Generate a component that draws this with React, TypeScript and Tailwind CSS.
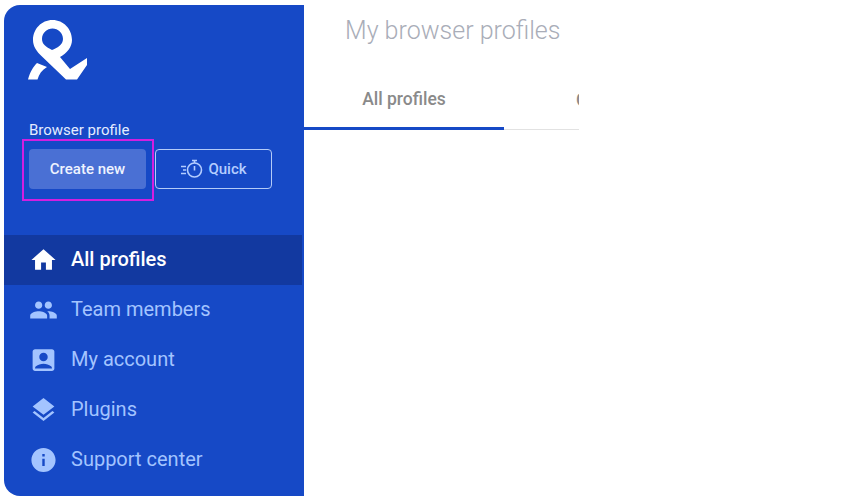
import { MdHome, MdPeople, MdAccountBox, MdLayers, MdInfo } from "react-icons/md"

const navItems = [
  { label: "All profiles", icon: MdHome, active: true },
  { label: "Team members", icon: MdPeople },
  { label: "My account", icon: MdAccountBox },
  { label: "Plugins", icon: MdLayers },
  { label: "Support center", icon: MdInfo },
]

function Logo() {
  return (
    <svg width="60" height="60" viewBox="0 0 60 60" className="block" fill="white">
      <path
        fillRule="evenodd"
        d="M38 59.5 L14.5 37 C8 31 5 26 5 20 C5 9 13.5 0 24.5 0 C35.5 0 44 9 44 20 C44 27 39 33 32 37 L42 49 L59 38 L59 45 L49 59.5 Z M24 30 C29 28 35 25 35 19 C35 13 30 8.5 24.5 8.5 C19 8.5 14 13 14 19 C14 24 18 27 24 30 Z"
      />
      <path d="M0 59.5 C2 52 5 47 9 43 L19 47 C14 50 11 54 9.5 59.5 Z" />
    </svg>
  )
}

function Stopwatch() {
  return (
    <svg width="24" height="20" viewBox="0 0 24 20" fill="none" stroke="currentColor" strokeWidth="1.6">
      <circle cx="14.5" cy="11" r="7" />
      <path d="M14.5 7 V11.5 M12 1.5 H17 M14.5 1.5 V4 M1 7.5 H6 M3 11 H6 M1 14.5 H6" />
    </svg>
  )
}

function App() {
  return (
    <div className="flex h-[500px] w-[847px] overflow-hidden bg-white pt-[5px] pl-[4px] font-['Roboto',sans-serif]">
      <aside className="flex h-[491px] w-[300px] shrink-0 flex-col rounded-l-[16px] bg-[#1649c6]">
        <div className="pt-[15px] pl-[24px]">
          <Logo />
        </div>
        <p className="mt-[41px] pl-[25px] text-[15px] leading-[18px] text-[#e4ecff]">Browser profile</p>
        <div className="mt-[10px] flex gap-[9px] pl-[25px]">
          <div className="relative">
            <button className="flex h-[40px] w-[117px] items-center justify-center rounded-[4px] bg-[#4a70d4] text-[15px] font-medium text-[#eef3ff]">
              Create new
            </button>
            <span className="absolute -top-[10px] -right-[8px] -bottom-[12px] -left-[7px] border-2 border-[#d21fe0]" />
          </div>
          <button className="flex h-[40px] w-[117px] items-center justify-center gap-[4px] rounded-[4px] border-[1.5px] border-[#b4cbf8] text-[15px] font-medium text-[#b4cdff]">
            <Stopwatch />
            Quick
          </button>
        </div>
        <nav className="mt-[46px] flex flex-col">
          {navItems.map(({ label, icon: Icon, active }) => (
            <div
              key={label}
              className={`flex h-[50px] w-[298px] items-center gap-[13px] pb-[2px] pl-[25px] text-[20px] ${
                active ? "bg-[#1239a0] font-medium text-white" : "text-[#a3c4ff]"
              }`}
            >
              <span className="flex w-[29px] shrink-0 justify-center pt-[1px]">
                <Icon size={30} />
              </span>
              {label}
            </div>
          ))}
        </nav>
      </aside>
      <main className="w-[275px] overflow-hidden">
        <h1 className="pt-[11px] pl-[41px] text-[25px] leading-[30px] font-light text-[#a9adb8]">My browser profiles</h1>
        <div className="mt-[28px] flex h-[56px] w-[275px] border-b border-[#e2e2e2]">
          <div className="flex h-[56px] w-[200px] shrink-0 items-center justify-center border-b-[3px] border-[#1649c6] pb-[3px] text-[17.5px] font-medium text-[#8a8a8a]">
            All profiles
          </div>
          <div className="flex h-[55px] w-[150px] shrink-0 items-center pb-[3px] pl-[72px] text-[17.5px] font-medium text-[#8a8a8a]">
            Groups
          </div>
        </div>
      </main>
    </div>
  )
}

export default App
